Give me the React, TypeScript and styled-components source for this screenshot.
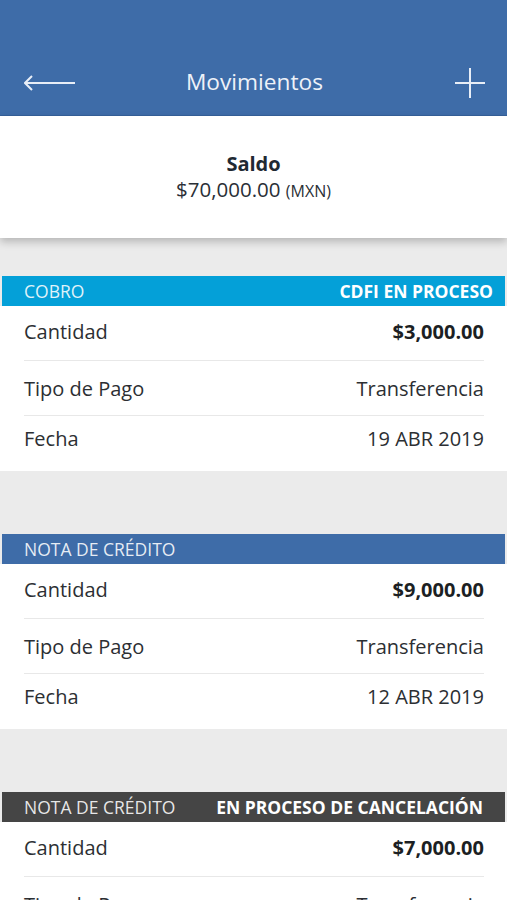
import React from 'react';
import styled, { createGlobalStyle } from 'styled-components';

const GlobalStyle = createGlobalStyle`
  html, body {
    margin: 0;
    padding: 0;
    background: #ebebeb;
    font-family: 'Open Sans', 'Noto Sans', sans-serif;
  }
  * {
    box-sizing: border-box;
  }
`;

const Screen = styled.div`
  display: flex;
  flex-direction: column;
  width: 100%;
  min-height: 100vh;
  background: #ebebeb;
`;

const TopBar = styled.header`
  display: grid;
  grid-template-columns: 1fr auto 1fr;
  align-items: center;
  height: 116px;
  padding: 62px 22px 14px 24px;
  background: #3e6ca8;
  border-bottom: 1px solid #35609a;
`;

const Title = styled.h1`
  margin: 0;
  font-size: 22.7px;
  font-weight: 400;
  color: #eef2f8;
`;

const IconButton = styled.button<{ align: 'left' | 'right' }>`
  display: flex;
  justify-content: ${(p) => (p.align === 'left' ? 'flex-start' : 'flex-end')};
  align-items: center;
  padding: 0;
  margin-top: 2px;
  border: none;
  background: none;
  color: #e8eef7;
`;

const BalanceCard = styled.section`
  position: relative;
  z-index: 1;
  display: flex;
  flex-direction: column;
  align-items: center;
  justify-content: center;
  height: 122px;
  padding-top: 2px;
  background: #fff;
  box-shadow: 0 4px 8px rgba(0, 0, 0, 0.22);
  color: #1f2933;
`;

const BalanceLabel = styled.div`
  font-size: 20px;
  font-weight: 700;
  line-height: 24px;
`;

const BalanceAmount = styled.div`
  font-size: 20.5px;
  line-height: 26px;
  color: #2a2f36;

  small {
    font-size: 16px;
  }
`;

const List = styled.div`
  display: flex;
  flex-direction: column;
  gap: 63px;
  padding-top: 38px;
`;

const Section = styled.section`
  display: flex;
  flex-direction: column;
`;

const SectionBar = styled.div<{ tone: string; padRight: number }>`
  display: flex;
  justify-content: space-between;
  align-items: center;
  height: 30px;
  margin: 0 2px;
  padding: 0 ${(p) => p.padRight}px 0 22px;
  background: ${(p) => p.tone};
  color: #fff;
  font-size: 17.5px;
  text-transform: uppercase;
`;

const BarLabel = styled.span`
  color: rgba(255, 255, 255, 0.88);
`;

const BarStatus = styled.span`
  font-weight: 700;
`;

const Rows = styled.div`
  display: flex;
  flex-direction: column;
  padding: 0 23px 0 24px;
  background: #fff;
`;

const Row = styled.div`
  display: flex;
  justify-content: space-between;
  align-items: center;
  height: 55px;
  font-size: 20px;
  color: #2c2f33;
  border-bottom: 1px solid #e8e8e8;

  &:first-child {
    padding-bottom: 3px;
  }

  &:last-child {
    border-bottom: none;
    padding-bottom: 10px;
  }
`;

const Value = styled.span<{ strong?: boolean }>`
  font-weight: ${(p) => (p.strong ? 700 : 400)};
  color: ${(p) => (p.strong ? '#1c1f23' : '#2c2f33')};
`;

const BackIcon = () => (
  <svg width="52" height="20" viewBox="0 0 52 20" fill="none">
    <path d="M1 10 H51" stroke="currentColor" strokeWidth="2" />
    <path d="M8 3 L1 10 L8 17" stroke="currentColor" strokeWidth="2" />
  </svg>
);

const PlusIcon = () => (
  <svg width="30" height="30" viewBox="0 0 30 30" fill="none">
    <path d="M15 0 V30 M0 15 H30" stroke="currentColor" strokeWidth="2" />
  </svg>
);

interface Movement {
  kind: string;
  status?: string;
  tone: string;
  padRight: number;
  amount: string;
  payment: string;
  date: string;
}

const movements: Movement[] = [
  {
    kind: 'Cobro',
    status: 'CDFI en proceso',
    tone: '#04a0d8',
    padRight: 12,
    amount: '$3,000.00',
    payment: 'Transferencia',
    date: '19 ABR 2019',
  },
  {
    kind: 'Nota de crédito',
    tone: '#3e6ca8',
    padRight: 12,
    amount: '$9,000.00',
    payment: 'Transferencia',
    date: '12 ABR 2019',
  },
  {
    kind: 'Nota de crédito',
    status: 'En proceso de cancelación',
    tone: '#454545',
    padRight: 22,
    amount: '$7,000.00',
    payment: 'Transferencia',
    date: '05 ABR 2019',
  },
];

const App: React.FC = () => (
  <>
    <GlobalStyle />
    <Screen>
      <TopBar>
        <IconButton align="left" aria-label="Regresar">
          <BackIcon />
        </IconButton>
        <Title>Movimientos</Title>
        <IconButton align="right" aria-label="Agregar">
          <PlusIcon />
        </IconButton>
      </TopBar>
      <BalanceCard>
        <BalanceLabel>Saldo</BalanceLabel>
        <BalanceAmount>
          $70,000.00 <small>(MXN)</small>
        </BalanceAmount>
      </BalanceCard>
      <List>
        {movements.map((m, idx) => (
          <Section key={`mov-${idx}`}>
            <SectionBar tone={m.tone} padRight={m.padRight}>
              <BarLabel>{m.kind}</BarLabel>
              {m.status && <BarStatus>{m.status}</BarStatus>}
            </SectionBar>
            <Rows>
              <Row>
                <span>Cantidad</span>
                <Value strong>{m.amount}</Value>
              </Row>
              <Row>
                <span>Tipo de Pago</span>
                <Value>{m.payment}</Value>
              </Row>
              <Row>
                <span>Fecha</span>
                <Value>{m.date}</Value>
              </Row>
            </Rows>
          </Section>
        ))}
      </List>
    </Screen>
  </>
);

export default App;
